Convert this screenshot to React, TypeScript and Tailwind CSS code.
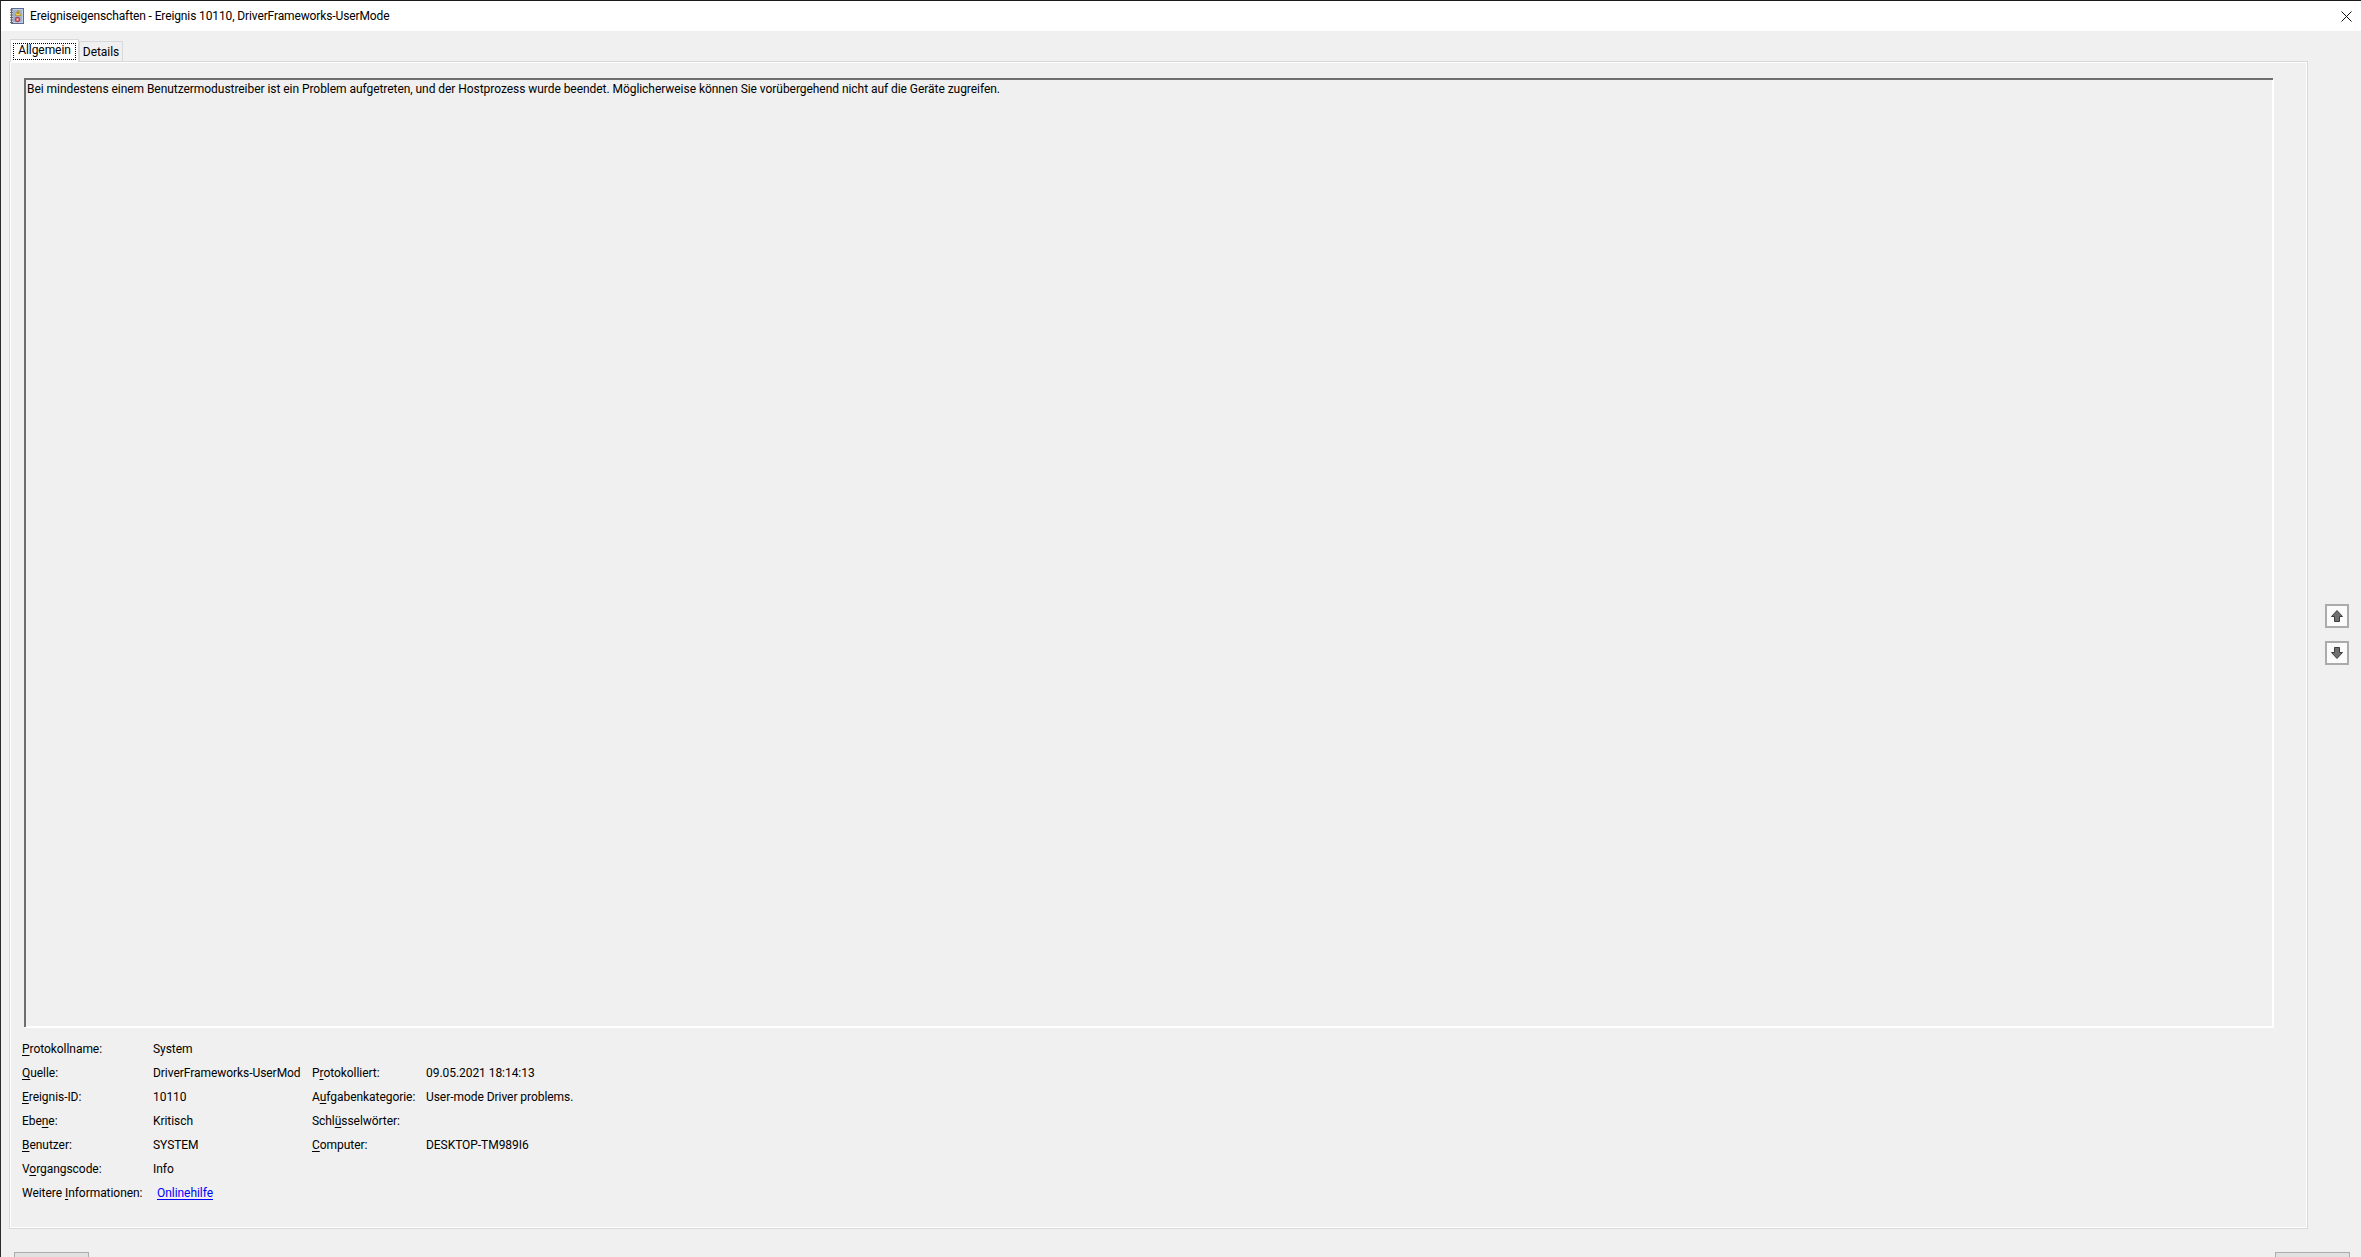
import React from 'react';

type Label = { before: string; key: string; after: string };

const rows: { left: Label; value: string; right?: Label; rightValue?: string }[] = [
	{ left: { before: '', key: 'P', after: 'rotokollname:' }, value: 'System' },
	{
		left: { before: '', key: 'Q', after: 'uelle:' },
		value: 'DriverFrameworks-UserMod',
		right: { before: 'P', key: 'r', after: 'otokolliert:' },
		rightValue: '09.05.2021 18:14:13',
	},
	{
		left: { before: '', key: 'E', after: 'reignis-ID:' },
		value: '10110',
		right: { before: 'A', key: 'u', after: 'fgabenkategorie:' },
		rightValue: 'User-mode Driver problems.',
	},
	{
		left: { before: 'Ebe', key: 'n', after: 'e:' },
		value: 'Kritisch',
		right: { before: 'Schl', key: 'ü', after: 'sselwörter:' },
		rightValue: '',
	},
	{
		left: { before: '', key: 'B', after: 'enutzer:' },
		value: 'SYSTEM',
		right: { before: '', key: 'C', after: 'omputer:' },
		rightValue: 'DESKTOP-TM989I6',
	},
	{ left: { before: 'V', key: 'o', after: 'rgangscode:' }, value: 'Info' },
];

function Mnemonic({ label }: { label: Label }) {
	return (
		<span className="whitespace-nowrap">
			{label.before}
			<span className="underline underline-offset-2">{label.key}</span>
			{label.after}
		</span>
	);
}

function EventIcon() {
	return (
		<svg width="14" height="16" viewBox="0 0 14 16" className="shrink-0">
			<rect x="1.5" y="0.5" width="12" height="15" fill="#c3cfe6" stroke="#5b6a8f" />
			<path d="M3 3h9M3 5h9M3 7h9M3 9h9M3 11h9M3 13h9" stroke="#8094bd" strokeWidth="1" />
			<path d="M0 2h3M0 4.5h3M0 7h3M0 9.5h3M0 12h3M0 14.5h3" stroke="#666" strokeWidth="1" />
			<path d="M8 2 L11 7.5 H5 Z" fill="#f5cf45" stroke="#a98a1c" strokeWidth="0.6" />
			<path d="M8 3.8v2" stroke="#4a3a08" strokeWidth="0.9" />
			<circle cx="7.5" cy="11.5" r="2.4" fill="#cf5a63" stroke="#8f2a33" strokeWidth="0.6" />
			<circle cx="7.5" cy="11.5" r="0.9" fill="#f0dcdd" />
		</svg>
	);
}

function ArrowButton({ down }: { down?: boolean }) {
	return (
		<div className="w-6 h-[24px] border-2 border-[#ababab] bg-[#fbfbfb] flex items-center justify-center">
			<svg width="14" height="14" viewBox="0 0 14 14">
				<path
					d={down ? 'M4.5 1.5h5v5h3L7 12.5 1.5 6.5h3z' : 'M4.5 12.5h5v-5h3L7 1.5 1.5 7.5h3z'}
					fill="#6f6f6f"
					stroke="#3c3c3c"
					strokeWidth="1"
				/>
			</svg>
		</div>
	);
}

export default function App() {
	return (
		<div className="h-screen w-full overflow-hidden flex flex-col bg-[#f0f0f0] border-t border-l border-t-[#1a1a1a] border-l-[#2b2b2b] text-[12px] leading-4 tracking-[-0.05px] text-black font-['Roboto',sans-serif]">
			<header className="h-[30px] shrink-0 bg-white flex items-center pl-[9px] pr-[9px]">
				<EventIcon />
				<span className="ml-[6px] tracking-[-0.12px]">
					Ereigniseigenschaften - Ereignis 10110, DriverFrameworks-UserMode
				</span>
				<svg width="11" height="11" viewBox="0 0 11 11" className="ml-auto">
					<path d="M0.5 0.5l10 10M10.5 0.5l-10 10" stroke="#111" strokeWidth="1" />
				</svg>
			</header>

			<div className="flex flex-1 min-h-0 pl-[8px]">
				<div className="w-[2299px] shrink-0 flex flex-col">
					<div className="flex h-[30px] items-end pl-[1px]">
						<div className="h-[23px] w-[69px] mb-[-1px] z-10 bg-white border border-[#d9d9d9] border-b-0 flex items-end justify-center pb-[2px]">
							<span className="border border-dotted border-black px-[4px] h-[17px] leading-[13px]">
								Allgemein
							</span>
						</div>
						<div className="h-[20px] w-[44px] bg-[#f0f0f0] border border-[#d9d9d9] border-b-0 flex items-center justify-center">
							Details
						</div>
					</div>

					<main className="h-[1168px] border border-[#d9d9d9] shadow-[inset_1px_1px_0_#fff,inset_-1px_-1px_0_#fff] pl-[14px] pt-[16px] flex flex-col">
						<div className="w-[2249px] h-[949px] shrink-0 border-2 border-r-0 border-b-0 border-[#6e6e6e] shadow-[1px_1px_0_#fff,inset_-1px_-1px_0_#fff] px-[1px] pt-[1px]">
							<p className="whitespace-nowrap">
								Bei mindestens einem Benutzermodustreiber ist ein Problem aufgetreten, und der Hostprozess wurde beendet. Möglicherweise können Sie vorübergehend nicht auf die Geräte zugreifen.
							</p>
						</div>

						<div className="mt-[10px] -ml-[2px]">
							{rows.map((row) => (
								<div key={row.value} className="h-6 flex items-center">
									<div className="w-[131px] shrink-0">
										<Mnemonic label={row.left} />
									</div>
									<div className="w-[150px] mr-[9px] shrink-0 whitespace-nowrap">
										{row.value}
									</div>
									{row.right && (
										<>
											<div className="w-[114px] shrink-0">
												<Mnemonic label={row.right} />
											</div>
											<div className="whitespace-nowrap">{row.rightValue}</div>
										</>
									)}
								</div>
							))}
							<div className="h-6 flex items-center">
								<div className="w-[135px] shrink-0 whitespace-nowrap">
									Weitere <span className="underline underline-offset-2">I</span>nformationen:
								</div>
								<a className="text-[#0000ff] underline underline-offset-2">Onlinehilfe</a>
							</div>
						</div>
					</main>
				</div>

				<div className="flex-1 flex flex-col items-start pl-[17px] pt-[573px] gap-[13px]">
					<ArrowButton />
					<ArrowButton down />
				</div>
			</div>

			<footer className="h-[27px] shrink-0 flex justify-between items-start pt-[22px] pl-[13px] pr-[11px]">
				<div className="w-[75px] h-6 bg-[#e1e1e1] border border-[#adadad] shrink-0" />
				<div className="w-[75px] h-6 bg-[#e1e1e1] border border-[#adadad] shrink-0" />
			</footer>
		</div>
	);
}
